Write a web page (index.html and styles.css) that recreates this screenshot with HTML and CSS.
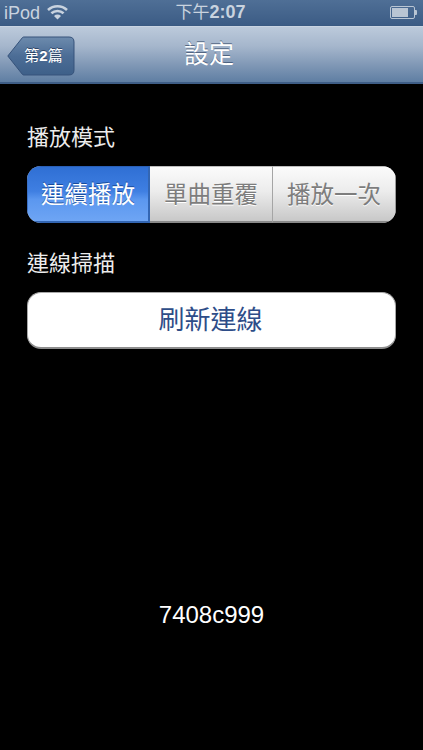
FILE: index.html
```html
<!DOCTYPE html>
<html lang="zh-Hant">
<head>
<meta charset="utf-8">
<title>設定</title>
<link rel="stylesheet" href="styles.css">
</head>
<body>
<div class="statusbar">
  <div class="status-left">
    <span class="carrier">iPod</span>
    <svg class="wifi" width="21" height="16" viewBox="0 0 21 16">
      <path d="M1 6 A14 14 0 0 1 20 6" class="wifi-arc"/>
      <path d="M4.4 9.3 A9.2 9.2 0 0 1 16.6 9.3" class="wifi-arc"/>
      <path d="M10.5 15.5 L7 11.9 A5 5 0 0 1 14 11.9 Z" class="wifi-dot"/>
    </svg>
  </div>
  <div class="clock">下午<b>2:07</b></div>
  <div class="battery">
    <div class="battery-body"><div class="battery-fill"></div></div>
    <div class="battery-tip"></div>
  </div>
</div>
<header class="navbar">
  <button class="back">
    <svg class="back-shape" width="68" height="40" viewBox="0 0 68 40">
      <defs>
        <linearGradient id="backFill" x1="0" y1="0" x2="0" y2="1">
          <stop offset="0" stop-color="#6d8bad"/>
          <stop offset="0.5" stop-color="#4c6d96"/>
          <stop offset="1" stop-color="#3e6089"/>
        </linearGradient>
      </defs>
      <path d="M0.8 20 L15.5 1.5 Q16 1 17 1 L62 1 Q67 1 67 6 L67 34 Q67 39 62 39 L17 39 Q16 39 15.5 38.500 Z" fill="url(#backFill)" stroke="#36527a" stroke-width="1"/>
    </svg>
    <span class="back-label">第<b>2</b>篇</span>
  </button>
  <h1 class="title">設定</h1>
</header>
<main class="content">
  <div class="section-label first">播放模式</div>
  <div class="segments">
    <div class="segment active">連續播放</div>
    <div class="segment">單曲重覆</div>
    <div class="segment">播放一次</div>
  </div>
  <div class="section-label second">連線掃描</div>
  <button class="refresh">刷新連線</button>
  <div class="code">7408c999</div>
</main>
</body>
</html>
```
FILE: styles.css
```css
* { box-sizing: border-box; }
html, body { margin: 0; padding: 0; }
body {
  width: 423px;
  height: 750px;
  overflow: hidden;
  background: #000;
  color: #fff;
  font-family: "Liberation Sans", "Noto Sans CJK TC", sans-serif;
}
.statusbar {
  height: 26px;
  display: grid;
  grid-template-columns: 1fr auto 1fr;
  align-items: center;
  padding: 0 5px 0 4px;
  background: linear-gradient(#4f6f96, #3c5c85);
  color: #c9d3df;
  font-size: 18px;
  border-bottom: 1px solid #3a5a82;
}
.status-left { display: flex; align-items: center; gap: 7px; }
.carrier { font-size: 18px; line-height: 24px; }
.wifi { display: block; margin-top: -2px; }
.wifi-arc { fill: none; stroke: #c9d3df; stroke-width: 2.6; }
.wifi-dot { fill: #c9d3df; }
.clock { font-size: 17px; line-height: 24px; white-space: nowrap; margin-left: -1px; }
.clock b { font-size: 18px; font-weight: 700; }
.battery { justify-self: end; display: flex; align-items: center; margin-right: 1px; }
.battery-body {
  width: 25px;
  height: 13px;
  border: 1px solid #b9c5d3;
  border-radius: 2px;
  padding: 1px;
}
.battery-fill { width: 16px; height: 100%; background: #b9c5d3; }
.battery-tip { width: 2px; height: 5px; background: #b9c5d3; border-radius: 0 1px 1px 0; }

.navbar {
  height: 58px;
  position: relative;
  display: flex;
  align-items: center;
  justify-content: center;
  background: linear-gradient(#bccadb, #a5b6cc 35%, #7f97b5 70%, #5f7ea3);
  border-top: 1px solid #c9d4e2;
  border-bottom: 2px solid #3f5e87;
}
.back {
  position: absolute;
  left: 7px;
  top: 9px;
  width: 68px;
  height: 40px;
  padding: 0 0 0 8px;
  border: 0;
  background: none;
  display: flex;
  align-items: center;
  justify-content: center;
  font-family: inherit;
  color: #fff;
}
.back-shape { position: absolute; left: 0; top: 0; }
.back-label {
  position: relative;
  font-size: 15px;
  line-height: 20px;
  text-shadow: 0 -1px 0 rgba(30, 50, 80, .7);
  white-space: nowrap;
  margin-left: -3px;
}
.title {
  margin: 0 5px 2px 0;
  font-size: 25px;
  font-weight: 400;
  line-height: 30px;
  color: #fff;
  text-shadow: 0 -1px 0 rgba(50, 70, 100, .7);
}

.content { padding: 0 27px; display: flex; flex-direction: column; }
.section-label { font-size: 22px; line-height: 28px; color: #ececec; letter-spacing: 0; }
.section-label.first { margin-top: 40px; }
.section-label.second { margin-top: 27px; }
.segments {
  margin-top: 14px;
  height: 57px;
  display: flex;
  border-radius: 14px;
  overflow: hidden;
  background: #ccc;
}
.segment {
  flex: 1 1 0;
  display: flex;
  align-items: center;
  justify-content: center;
  padding-bottom: 2px;
  font-size: 23.500px;
  color: #7d7d7d;
  background: linear-gradient(#fbfbfb, #ececec 45%, #c8c8c8);
  border-left: 1px solid #a5a5a5;
  border-top: 1px solid #bdbdbd;
  border-bottom: 2px solid #8a8a8a;
  text-shadow: 0 1px 0 #fff;
}
.segment:first-child { border-left: 0; }
.segment:last-child { border-right: 1px solid #9a9a9a; }
.segment.active {
  flex: 0 0 123px;
  color: #fff;
  background: linear-gradient(#2f6fd4, #3f7fe2 45%, #5b97ef 60%, #6ea5f4);
  border-top: 1px solid #2a5fb5;
  border-right: 2px solid #3366b3;
  border-bottom: 2px solid #3366b3;
  border-left: 1px solid #3a70c5;
  text-shadow: 0 -1px 0 rgba(0, 40, 110, .6);
}
.segment.active + .segment { border-left: 0; }
.refresh {
  margin-top: 14px;
  height: 57px;
  border: 1px solid #a8a8a8;
  border-bottom: 2px solid #8d8d8d;
  border-radius: 14px;
  background: #fff;
  color: #2e4d88;
  font-family: inherit;
  font-size: 26px;
  padding: 0 2px 5px 0;
}
.code {
  margin-top: 252px;
  text-align: center;
  font-size: 24px;
  line-height: 28px;
}
```
